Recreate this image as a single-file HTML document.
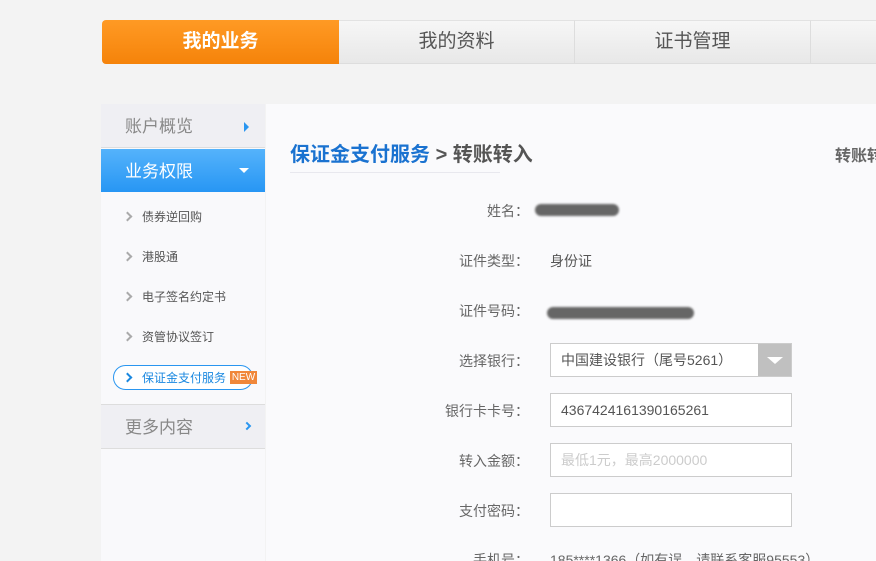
<!DOCTYPE html>
<html><head><meta charset="utf-8"><style>
*{margin:0;padding:0;box-sizing:border-box}
html,body{width:876px;height:561px;overflow:hidden}
body{background:#f3f3f3;font-family:"Liberation Sans","Noto Sans CJK SC",sans-serif;position:relative}
.a{position:absolute}
.tab{top:20px;height:44px;background:linear-gradient(#f6f6f6,#e8e8e8);border-top:1px solid #e2e2e2;border-bottom:1px solid #ddd;border-right:1px solid #ddd;font-size:19px;color:#555;text-align:center;line-height:42px}
.tab.on{background:linear-gradient(#ff9a24,#f5830a);color:#fff;font-weight:bold;border:none;border-radius:4px 0 0 4px;line-height:44px}
.side{left:101px;top:104px;width:164px;height:457px;background:#f9f9fb}
.main{left:266px;top:104px;width:610px;height:457px;background:#fafafc}
.lbl{font-size:14px;color:#666;text-align:right;width:120px;left:409px}
.inp{left:550px;width:242px;height:34px;border:1px solid #ccc;background:#fff;font-size:14px;color:#555;padding-left:10px;line-height:32px}
.sub{left:142px;font-size:12px;color:#555}
.chev{left:124px;width:7px;height:7px;border-right:2px solid #aaa;border-top:2px solid #aaa;transform:rotate(45deg)}
</style></head><body>
<div class="a tab on" style="left:102px;width:237px">我的业务</div>
<div class="a tab" style="left:339px;width:236px">我的资料</div>
<div class="a tab" style="left:575px;width:236px">证书管理</div>
<div class="a tab" style="left:811px;width:70px;border-right:none"></div>

<div class="a side"></div>
<div class="a" style="left:101px;top:104px;width:164px;height:44px;background:#efeff3;border-bottom:1px solid #ddd;font-size:17px;color:#888;padding-left:24px;line-height:46px">账户概览</div>
<div class="a" style="left:244px;top:122px;width:0;height:0;border-left:5px solid #2a96f0;border-top:5px solid transparent;border-bottom:5px solid transparent"></div>
<div class="a" style="left:101px;top:149px;width:164px;height:43px;background:linear-gradient(#55b3fb,#2796f4);font-size:17px;color:#fff;padding-left:24px;line-height:45px">业务权限</div>
<div class="a" style="left:239px;top:168px;width:0;height:0;border-top:5px solid #fff;border-left:5px solid transparent;border-right:5px solid transparent"></div>
<div class="a chev" style="top:213px"></div><div class="a sub" style="top:208px">债券逆回购</div>
<div class="a chev" style="top:253px"></div><div class="a sub" style="top:248px">港股通</div>
<div class="a chev" style="top:293px"></div><div class="a sub" style="top:288px">电子签名约定书</div>
<div class="a chev" style="top:333px"></div><div class="a sub" style="top:328px">资管协议签订</div>
<div class="a" style="left:113px;top:365px;width:140px;height:25px;border:1px solid #2a96f0;border-radius:13px;background:#fff"></div>
<div class="a chev" style="top:374px;border-color:#1a88e0"></div><div class="a sub" style="top:369px;color:#1a88e0">保证金支付服务</div>
<div class="a" style="left:230px;top:371px;width:27px;height:13px;background:#f0873a;color:#fff;font-size:10px;line-height:13px;text-align:center">NEW</div>
<div class="a" style="left:101px;top:404px;width:164px;height:45px;background:#efeff3;border-top:1px solid #ddd;border-bottom:1px solid #ddd;font-size:17px;color:#888;padding-left:24px;line-height:45px">更多内容</div>
<div class="a" style="left:244px;top:423px;width:6px;height:6px;border-right:2px solid #2a96f0;border-top:2px solid #2a96f0;transform:rotate(45deg)"></div>

<div class="a main"></div>
<div class="a" style="left:290px;top:138px;font-size:20px;font-weight:bold;color:#1a72d0;white-space:nowrap">保证金支付服务 <span style="color:#555">&gt; 转账转入</span></div>
<div class="a" style="left:290px;top:172px;width:210px;height:1px;background:#e8e8ee"></div>
<div class="a" style="left:835px;top:142px;font-size:16px;font-weight:bold;color:#666;white-space:nowrap">转账转入</div>

<div class="a lbl" style="top:201px">姓名：</div>
<div class="a" style="left:535px;top:204px;width:84px;height:12px;background:#666;border-radius:6px;filter:blur(1px)"></div>
<div class="a lbl" style="top:251px">证件类型：</div><div class="a" style="left:550px;top:251px;font-size:14px;color:#555">身份证</div>
<div class="a lbl" style="top:301px">证件号码：</div>
<div class="a" style="left:547px;top:307px;width:147px;height:12px;background:#666;border-radius:6px;filter:blur(1px)"></div>
<div class="a lbl" style="top:351px">选择银行：</div>
<div class="a inp" style="top:343px">中国建设银行（尾号5261）</div>
<div class="a" style="left:758px;top:344px;width:33px;height:32px;background:#c0c0c0"></div>
<div class="a" style="left:767px;top:357px;width:0;height:0;border-top:7px solid #fff;border-left:8px solid transparent;border-right:8px solid transparent"></div>
<div class="a lbl" style="top:401px">银行卡卡号：</div>
<div class="a inp" style="top:393px">4367424161390165261</div>
<div class="a lbl" style="top:451px">转入金额：</div>
<div class="a inp" style="top:443px;color:#ccc">最低1元，最高2000000</div>
<div class="a lbl" style="top:501px">支付密码：</div>
<div class="a inp" style="top:493px"></div>
<div class="a lbl" style="top:550px">手机号：</div>
<div class="a" style="left:550px;top:550px;font-size:14px;color:#666;white-space:nowrap">185****1366（如有误，请联系客服95553）</div>
</body></html>
